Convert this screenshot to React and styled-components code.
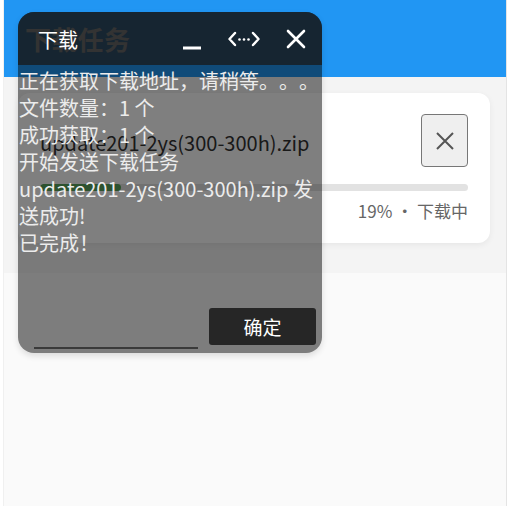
import React from "react";
import styled, { createGlobalStyle } from "styled-components";

const Global = createGlobalStyle`
  html, body { margin: 0; padding: 0; background: #ffffff; }
  body {
    font-family: "Noto Sans CJK SC", "Noto Sans", sans-serif;
    text-spacing-trim: space-all;
  }
  * { box-sizing: border-box; }
`;

const Screen = styled.div`
  position: relative;
  width: 504px;
  height: 506px;
  margin-left: 3px;
  background: #fafafa;
  border-left: 1px solid #f0f0f0;
  border-right: 1px solid #e4e4e4;
  overflow: hidden;
  display: flex;
  flex-direction: column;
`;

const AppBar = styled.header`
  height: 77px;
  background: #2196f3;
  display: flex;
  align-items: center;
  padding: 0 0 1px 21px;
  flex-shrink: 0;
`;

const AppTitle = styled.h1`
  margin: 0;
  font-size: 26px;
  font-weight: 700;
  color: #ffffff;
  letter-spacing: 0.3px;
`;

const Content = styled.main`
  padding: 16px 16px 30px 14px;
  background: #f4f4f4;
`;

const Card = styled.section`
  background: #ffffff;
  border-radius: 12px;
  box-shadow: 0 2px 6px rgba(0, 0, 0, 0.06);
  padding: 21px 22px 20px 22px;
  display: flex;
  flex-direction: column;
`;

const FileRow = styled.div`
  display: flex;
  align-items: center;
  justify-content: space-between;
`;

const FileName = styled.div`
  font-size: 20px;
  color: #333333;
  padding-top: 4px;
`;

const CancelButton = styled.button`
  width: 47px;
  height: 53px;
  border: 1px solid #777777;
  border-radius: 4px;
  background: #efefef;
  display: flex;
  align-items: center;
  justify-content: center;
  padding: 0;
`;

const Track = styled.div`
  margin-top: 17px;
  height: 7px;
  border-radius: 4px;
  background: #e2e2e2;
  overflow: hidden;
`;

const Fill = styled.div`
  height: 100%;
  background: #5aa55e;
  border-radius: 4px;
`;

const Status = styled.div`
  margin-top: 8px;
  text-align: right;
  font-size: 17px;
  line-height: 24px;
  color: #666666;
`;

const Dialog = styled.div`
  position: absolute;
  left: 14px;
  top: 12px;
  width: 304px;
  height: 341px;
  border-radius: 16px;
  overflow: hidden;
  display: flex;
  flex-direction: column;
  background: rgba(0, 0, 0, 0.5);
  box-shadow: 0 3px 6px rgba(0, 0, 0, 0.12);
`;

const DialogHeader = styled.div`
  height: 53px;
  flex-shrink: 0;
  background: rgba(24, 24, 24, 0.74);
  display: flex;
  align-items: center;
  padding: 0 16px 0 20px;
`;

const DialogTitle = styled.div`
  flex: 1;
  font-size: 20px;
  color: #ffffff;
  padding-top: 2px;
`;

const HeaderIcons = styled.div`
  display: flex;
  align-items: center;
  gap: 26px;
`;

const IconButton = styled.span`
  display: flex;
  align-items: center;
  justify-content: center;
  width: ${(p) => p.$w}px;
  height: 24px;
  padding-top: ${(p) => p.$down || 0}px;
`;

const DialogBody = styled.div`
  flex: 1;
  padding: 2px 0 0 1px;
  font-size: 20px;
  line-height: 27px;
  color: #ececec;
  white-space: pre-wrap;
  text-spacing-trim: space-all;
`;

const LogLine = styled.div``;

const DialogFooter = styled.div`
  display: flex;
  align-items: flex-end;
  justify-content: space-between;
  padding: 0 6px 8px 16px;
`;

const Underline = styled.div`
  width: 164px;
  height: 2px;
  background: #3a3a3a;
  margin-bottom: -4px;
`;

const ConfirmButton = styled.button`
  width: 107px;
  height: 37px;
  border: none;
  border-radius: 3px;
  background: #262626;
  color: #ffffff;
  font-family: "Noto Sans CJK SC", sans-serif;
  font-size: 19px;
  padding: 0;
`;

const logs = [
  "正在获取下载地址，请稍等。。。",
  "文件数量：1 个",
  "成功获取：1 个",
  "开始发送下载任务",
  "update201-2ys(300-300h).zip 发送成功!",
  "已完成！",
];

export default function App() {
  const progress = 19;
  return (
    <>
      <Global />
      <Screen>
        <AppBar>
          <AppTitle>下载任务</AppTitle>
        </AppBar>
        <Content>
          <Card>
            <FileRow>
              <FileName>update201-2ys(300-300h).zip</FileName>
              <CancelButton aria-label="取消">
                <svg width="20" height="20" viewBox="0 0 20 20">
                  <path d="M2 2 L18 18 M18 2 L2 18" stroke="#555" strokeWidth="2" fill="none" />
                </svg>
              </CancelButton>
            </FileRow>
            <Track>
              <Fill style={{ width: `${progress}%` }} />
            </Track>
            <Status>{progress}% · 下载中</Status>
          </Card>
        </Content>

        <Dialog>
          <DialogHeader>
            <DialogTitle>下载</DialogTitle>
            <HeaderIcons>
              <IconButton $w={20} $down={18}>
                <svg width="20" height="4" viewBox="0 0 20 4">
                  <rect x="1" y="0.5" width="18" height="3" fill="#fff" />
                </svg>
              </IconButton>
              <IconButton $w={32}>
                <svg width="32" height="16" viewBox="0 0 32 16">
                  <path d="M7 2 L1.5 8 L7 14 M25 2 L30.5 8 L25 14" stroke="#fff" strokeWidth="2.4" fill="none" strokeLinecap="round" strokeLinejoin="round" />
                  <circle cx="11.5" cy="8.5" r="1.3" fill="#fff" />
                  <circle cx="16" cy="8.5" r="1.3" fill="#fff" />
                  <circle cx="20.5" cy="8.5" r="1.3" fill="#fff" />
                </svg>
              </IconButton>
              <IconButton $w={20}>
                <svg width="20" height="20" viewBox="0 0 20 20">
                  <path d="M2 2 L18 18 M18 2 L2 18" stroke="#fff" strokeWidth="2.6" fill="none" strokeLinecap="round" />
                </svg>
              </IconButton>
            </HeaderIcons>
          </DialogHeader>
          <DialogBody>
            {logs.map((l, i) => (
              <LogLine key={i}>{l}</LogLine>
            ))}
          </DialogBody>
          <DialogFooter>
            <Underline />
            <ConfirmButton>确定</ConfirmButton>
          </DialogFooter>
        </Dialog>
      </Screen>
    </>
  );
}
